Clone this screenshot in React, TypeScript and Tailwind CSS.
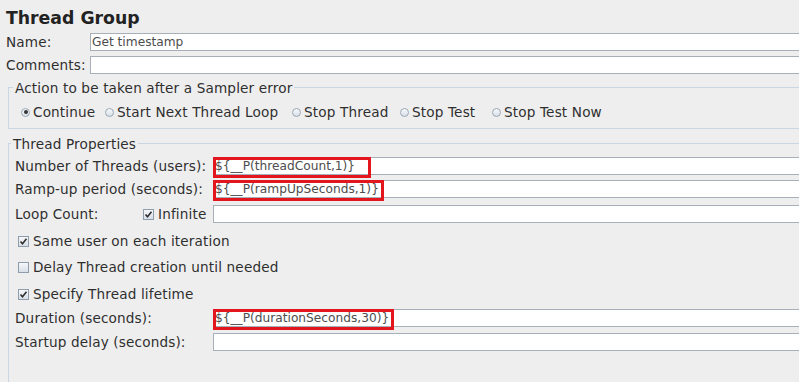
import type { ReactNode } from "react";

function Field({ value, mark }: { value?: string; mark?: number }) {
  return (
    <div className="relative flex h-[18px] flex-1 items-center border border-r-0 border-[#a7afb9] bg-white pl-[1px] text-[12.2px] tracking-normal text-[#4d4d4d]">
      <span className="whitespace-nowrap leading-none">{value}</span>
      {mark ? (
        <div
          className="absolute left-[-1px] top-[-1px] h-[21px] border-[3px] border-[#e3161d]"
          style={{ width: mark }}
        />
      ) : null}
    </div>
  );
}

function Radio({ label, on, w }: { label: string; on?: boolean; w: string }) {
  return (
    <span className={`flex shrink-0 items-center gap-[3px] ${w}`}>
      <span className="flex h-[9px] w-[9px] items-center justify-center rounded-full border border-[#9aa8b6] bg-gradient-to-b from-[#f7f9fb] to-[#d9e0e8]">
        {on && <span className="h-[4px] w-[4px] rounded-full bg-[#333]" />}
      </span>
      <span className="whitespace-nowrap">{label}</span>
    </span>
  );
}

function Check({ label, on }: { label: string; on?: boolean }) {
  return (
    <span className="flex items-center gap-[4px]">
      <span className="flex h-[11px] w-[11px] items-center justify-center border border-[#8e9cab] bg-gradient-to-b from-[#f6f8fa] to-[#d8dfe7]">
        {on && (
          <svg width="9" height="9" viewBox="0 0 9 9">
            <path d="M1.5 4.5 L3.5 6.8 L7.5 1.8" fill="none" stroke="#2e2e2e" strokeWidth="1.6" />
          </svg>
        )}
      </span>
      <span>{label}</span>
    </span>
  );
}

function Legend({ children, ml }: { children: ReactNode; ml: string }) {
  return (
    <div className={`-mt-[8px] h-[16px] w-fit bg-[#eeeeee] px-[2px] leading-[16px] ${ml}`}>
      {children}
    </div>
  );
}

function Row({ label, children }: { label: string; children: ReactNode }) {
  return (
    <div className="flex h-[18px] items-center">
      <span className="w-[198px] shrink-0">{label}</span>
      {children}
    </div>
  );
}

export default function App() {
  return (
    <div className="h-[382px] w-[799px] overflow-hidden bg-[#eeeeee] font-['DejaVu_Sans',sans-serif] text-[13.6px] tracking-[0.15px] text-[#2e2e2e]">
      <h1 className="mt-[4px] h-[28px] pl-[6px] text-[17.3px] font-bold leading-[28px] tracking-normal text-[#222]">
        Thread Group
      </h1>
      <div className="mt-[1px] flex h-[18px] items-center pl-[6px]">
        <span className="w-[84px] shrink-0">Name:</span>
        <Field value="Get timestamp" />
      </div>
      <div className="mt-[5px] flex h-[18px] items-center pl-[6px]">
        <span className="w-[84px] shrink-0">Comments:</span>
        <Field />
      </div>

      <div className="ml-[8px] mt-[13px] h-[42px] border border-r-0 border-[#c9d7e4]">
        <Legend ml="ml-[4px]">Action to be taken after a Sampler error</Legend>
        <div className="mt-[8px] flex h-[16px] items-center pl-[12px]">
          <Radio label="Continue" on w="w-[84px]" />
          <Radio label="Start Next Thread Loop" w="w-[187px]" />
          <Radio label="Stop Thread" w="w-[108px]" />
          <Radio label="Stop Test" w="w-[92px]" />
          <Radio label="Stop Test Now" w="w-[120px]" />
        </div>
      </div>

      <div className="ml-[8px] mt-[14px] h-[260px] border-l border-t border-[#c9d7e4]">
        <Legend ml="ml-[2px]">Thread Properties</Legend>
        <div className="pl-[6px]">
          <div className="mt-[5px]">
            <Row label="Number of Threads (users):">
              <Field value="${__P(threadCount,1)}" mark={158} />
            </Row>
          </div>
          <div className="mt-[5px]">
            <Row label="Ramp-up period (seconds):">
              <Field value="${__P(rampUpSeconds,1)}" mark={171} />
            </Row>
          </div>
          <div className="mt-[7px] flex h-[18px] items-center">
            <span className="w-[128px] shrink-0">Loop Count:</span>
            <div className="w-[70px] shrink-0">
              <Check label="Infinite" on />
            </div>
            <Field />
          </div>
          <div className="mt-[9px] flex h-[18px] items-center pl-[3px]">
            <Check label="Same user on each iteration" on />
          </div>
          <div className="mt-[8px] flex h-[18px] items-center pl-[3px]">
            <Check label="Delay Thread creation until needed" />
          </div>
          <div className="mt-[9px] flex h-[18px] items-center pl-[3px]">
            <Check label="Specify Thread lifetime" on />
          </div>
          <div className="mt-[6px]">
            <Row label="Duration (seconds):">
              <Field value="${__P(durationSeconds,30)}" mark={181} />
            </Row>
          </div>
          <div className="mt-[6px]">
            <Row label="Startup delay (seconds):">
              <Field />
            </Row>
          </div>
        </div>
      </div>
    </div>
  );
}
